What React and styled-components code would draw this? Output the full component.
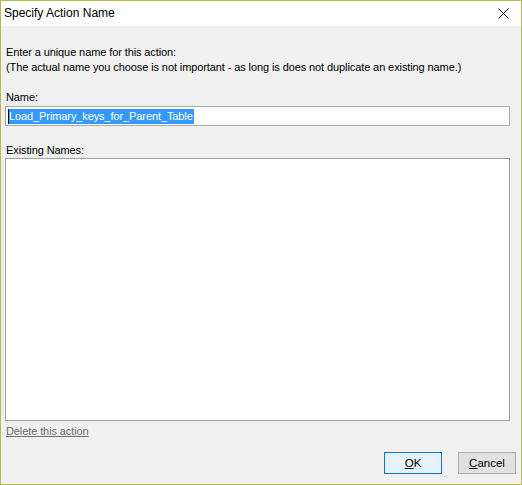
import React from 'react';
import styled, { createGlobalStyle } from 'styled-components';

const GlobalStyle = createGlobalStyle`
  html, body {
    margin: 0;
    padding: 0;
    background: #f0f0f0;
  }
  * {
    box-sizing: border-box;
  }
`;

const Window = styled.div`
  width: 522px;
  height: 485px;
  border: 1px solid #b7bb4f;
  display: flex;
  flex-direction: column;
  font-family: "Liberation Sans", Arial, sans-serif;
  font-size: 11px;
  letter-spacing: -0.1px;
  color: #000;
  background: #f0f0f0;
`;

const TitleBar = styled.div`
  height: 25px;
  flex: none;
  background: #fff;
  display: flex;
  align-items: center;
  justify-content: space-between;
  padding: 0 0 2px 3px;
`;

const Title = styled.span`
  font-size: 12px;
  letter-spacing: 0;
`;

const CloseButton = styled.button`
  width: 46px;
  height: 24px;
  border: none;
  background: transparent;
  display: flex;
  align-items: center;
  justify-content: center;
  padding: 0 0 0 10px;
  margin-top: 2px;
`;

const Body = styled.div`
  flex: 1;
  display: flex;
  flex-direction: column;
  padding: 19px 11px 10px 4px;
`;

const Intro = styled.div`
  line-height: 15px;
  padding-left: 1px;
  margin-bottom: 15px;
`;

const Label = styled.div`
  line-height: 15px;
  padding-left: 1px;
  margin-bottom: ${(p) => p.$gap}px;
`;

const NameInput = styled.div`
  height: 20px;
  background: #fff;
  border: 1px solid #ababab;
  display: flex;
  align-items: center;
  padding-left: 2px;
  margin-bottom: 17px;
`;

const Selection = styled.span`
  background: #3399ff;
  color: #fff;
  line-height: 15px;
  padding: 0 1px 0 0;
  border-left: 1px solid #000;
`;

const ListBox = styled.div`
  height: 263px;
  background: #fff;
  border: 1px solid #a0a0a0;
  margin-bottom: 3px;
`;

const LinkText = styled.a`
  color: #6d6d6d;
  text-decoration: underline;
  line-height: 15px;
  padding-left: 1px;
  align-self: flex-start;
  cursor: pointer;
`;

const ButtonRow = styled.div`
  margin-top: auto;
  display: flex;
  justify-content: flex-end;
  gap: 16px;
  margin-right: -6px;
`;

const DialogButton = styled.button`
  width: 58px;
  height: 22px;
  font-family: inherit;
  font-size: 11.5px;
  color: #000;
  border: 1px solid ${(p) => (p.$primary ? '#0078d7' : '#adadad')};
  background: ${(p) => (p.$primary ? '#e5f1fb' : '#e1e1e1')};
  padding: 0;
  & u {
    text-decoration: underline;
  }
`;

const CloseIcon = () => (
  <svg width="11" height="11" viewBox="0 0 11 11">
    <path d="M0.5 0.5 L10.5 10.5 M10.5 0.5 L0.5 10.5" stroke="#000" strokeWidth="1" fill="none" />
  </svg>
);

export default function App() {
  return (
    <>
      <GlobalStyle />
      <Window>
        <TitleBar>
          <Title>Specify Action Name</Title>
          <CloseButton aria-label="Close">
            <CloseIcon />
          </CloseButton>
        </TitleBar>
        <Body>
          <Intro>
            Enter a unique name for this action:
            <br />
            (The actual name you choose is not important - as long is does not duplicate an existing name.)
          </Intro>
          <Label $gap={1}>Name:</Label>
          <NameInput>
            <Selection>Load_Primary_keys_for_Parent_Table</Selection>
          </NameInput>
          <Label $gap={0}>Existing Names:</Label>
          <ListBox />
          <LinkText>Delete this action</LinkText>
          <ButtonRow>
            <DialogButton $primary>
              <u>O</u>K
            </DialogButton>
            <DialogButton>
              <u>C</u>ancel
            </DialogButton>
          </ButtonRow>
        </Body>
      </Window>
    </>
  );
}
